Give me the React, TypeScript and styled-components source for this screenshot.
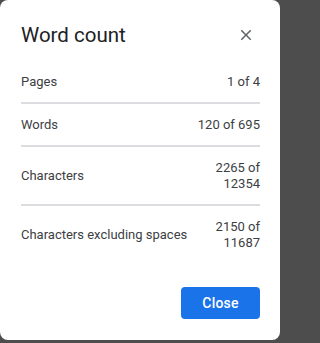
import React from "react";
import styled, { createGlobalStyle } from "styled-components";

const GlobalStyle = createGlobalStyle`
  html, body {
    margin: 0;
    padding: 0;
    background: #4d4d4d;
    overflow: hidden;
  }
  * { box-sizing: border-box; }
`;

const Dialog = styled.div`
  width: 280px;
  height: 340px;
  background: #ffffff;
  border-radius: 8px;
  display: flex;
  flex-direction: column;
  padding: 0 20px 21px 21px;
  font-family: Roboto, "Liberation Sans", Arial, sans-serif;
  color: #3c4043;
`;

const Header = styled.div`
  display: flex;
  align-items: center;
  justify-content: space-between;
  padding: 21px 0 12px;
`;

const Title = styled.h1`
  margin: 0;
  font-family: Roboto, "Open Sans", sans-serif;
  font-weight: 400;
  font-size: 20.5px;
  line-height: 28px;
  color: #202124;
`;

const CloseIcon = styled.button`
  width: 18px;
  height: 18px;
  padding: 0;
  margin: 0 5px 0 0;
  border: none;
  background: transparent;
  color: #5f6368;
  display: flex;
  align-items: center;
  justify-content: center;
  cursor: pointer;
`;

const Row = styled.div<{ $last?: boolean }>`
  display: flex;
  align-items: center;
  justify-content: space-between;
  padding: 12px 0 11px;
  border-bottom: ${(p) => (p.$last ? "none" : "2px solid #dadce0")};
  font-size: 13px;
  line-height: 16px;
`;

const Label = styled.div`
  color: #3c4043;
`;

const Value = styled.div`
  max-width: 70px;
  padding: 1px 0;
  text-align: right;
  color: #3c4043;
`;

const Footer = styled.div`
  margin-top: auto;
  display: flex;
  justify-content: flex-end;
`;

const PrimaryButton = styled.button`
  width: 79px;
  height: 32px;
  border: none;
  border-radius: 4px;
  background: #1a73e8;
  color: #ffffff;
  font-family: Roboto, "Liberation Sans", sans-serif;
  font-weight: 500;
  font-size: 14px;
  letter-spacing: 0.2px;
  cursor: pointer;
`;

const rows = [
  { label: "Pages", value: "1 of 4" },
  { label: "Words", value: "120 of 695" },
  { label: "Characters", value: "2265 of 12354" },
  { label: "Characters excluding spaces", value: "2150 of 11687" },
];

export default function App() {
  return (
    <>
      <GlobalStyle />
      <Dialog>
        <Header>
          <Title>Word count</Title>
          <CloseIcon aria-label="Close">
            <svg width="18" height="18" viewBox="0 0 24 24" fill="currentColor">
              <path d="M19 6.41L17.59 5 12 10.59 6.41 5 5 6.41 10.59 12 5 17.59 6.41 19 12 13.41 17.59 19 19 17.59 13.41 12z" />
            </svg>
          </CloseIcon>
        </Header>
        {rows.map((r, i) => (
          <Row key={r.label} $last={i === rows.length - 1}>
            <Label>{r.label}</Label>
            <Value>{r.value}</Value>
          </Row>
        ))}
        <Footer>
          <PrimaryButton>Close</PrimaryButton>
        </Footer>
      </Dialog>
    </>
  );
}
